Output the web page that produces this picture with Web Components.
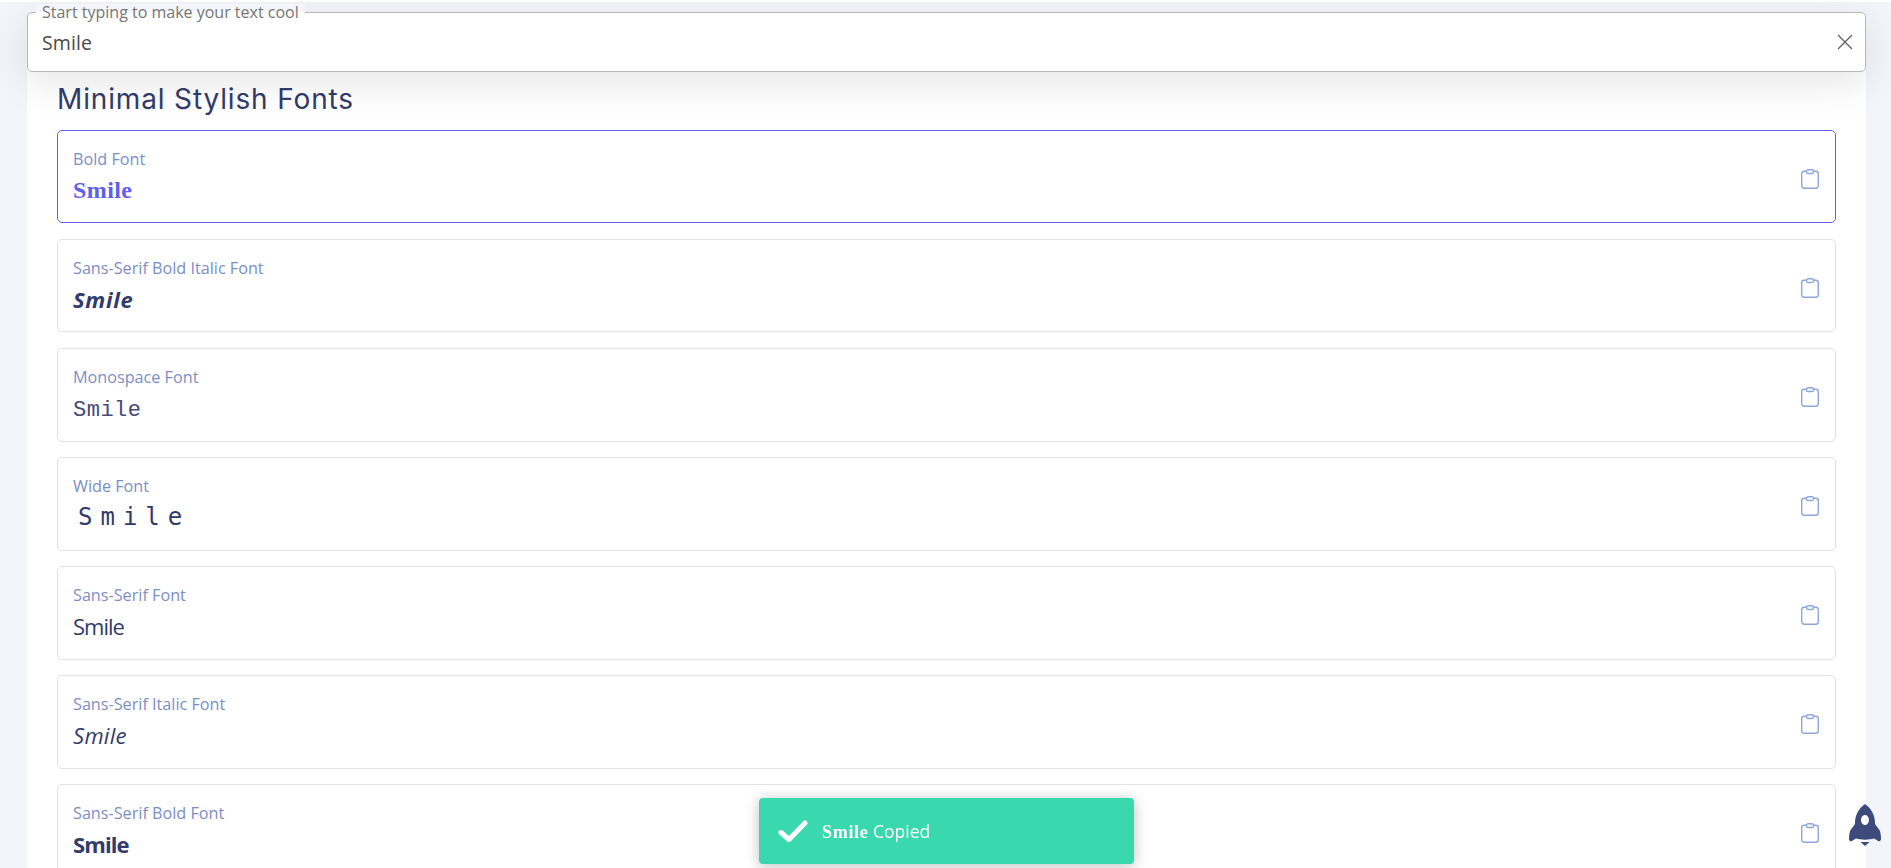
<!doctype html>
<html lang="en">
<head>
<meta charset="utf-8">
<title>Minimal Stylish Fonts</title>
<style>
  html { background: #fff; height: 100%; overflow: hidden; }
  body {
    margin: 2px 0 0;
    height: calc(100% - 2px);
    overflow: hidden;
    background: #f4f5fb;
    font-family: "Open Sans", "Noto Sans", sans-serif;
  }
</style>
</head>
<body>
<app-page>
  <search-field slot="search" legend="Start typing to make your text cool" value="Smile"></search-field>
  <font-section title="Minimal Stylish Fonts">
    <font-card label="Bold Font" kind="bold" active>Smile</font-card>
    <font-card label="Sans-Serif Bold Italic Font" kind="sans-bold-italic">Smile</font-card>
    <font-card label="Monospace Font" kind="mono">Smile</font-card>
    <font-card label="Wide Font" kind="wide">Smile</font-card>
    <font-card label="Sans-Serif Font" kind="sans">Smile</font-card>
    <font-card label="Sans-Serif Italic Font" kind="sans-italic">Smile</font-card>
    <font-card label="Sans-Serif Bold Font" kind="sans-bold">Smile</font-card>
  </font-section>
</app-page>
<copy-toast><b>Smile</b> Copied</copy-toast>
<scroll-rocket></scroll-rocket>

<script>
(() => {
  class AppPage extends HTMLElement {
    constructor() {
      super();
      this.attachShadow({ mode: "open" }).innerHTML = `
        <style>
          :host {
            display: block;
            width: 1839px;
            margin-left: 27px;
            min-height: 100vh;
            background: #fff;
            border-radius: 8px 8px 0 0;
          }
        </style>
        <slot name="search"></slot>
        <slot></slot>
      `;
    }
  }

  class SearchField extends HTMLElement {
    constructor() {
      super();
      const legend = this.getAttribute("legend") || "";
      const value = this.getAttribute("value") || "";
      this.attachShadow({ mode: "open" }).innerHTML = `
        <style>
          :host {
            display: block;
            position: relative;
            z-index: 2;
            padding-top: 10px;
            background: linear-gradient(#f4f5fb 40px, transparent 40px);
            border-radius: 8px 8px 0 0;
          }
          .box {
            box-sizing: border-box;
            height: 60px;
            background: #fff;
            border: 1px solid #b6b6b6;
            border-radius: 5px;
            box-shadow: 0 10px 40px rgba(0, 0, 0, 0.11);
            display: flex;
            align-items: center;
            justify-content: space-between;
            padding: 0 12px 0 14px;
            position: relative;
          }
          .legend {
            position: absolute;
            left: 8px;
            top: -9px;
            padding: 0 6px;
            font-size: 16px;
            line-height: 17px;
            color: #757575;
            background: linear-gradient(#f4f5fb 8px, #fff 8px);
          }
          .value {
            font-size: 19.5px;
            letter-spacing: .1px;
            color: #4a4a4a;
          }
          svg { display: block; }
        </style>
        <div class="box">
          <span class="legend">${legend}</span>
          <span class="value">${value}</span>
          <svg width="16" height="16" viewBox="0 0 16 16" fill="none" stroke="#5f5f5f" stroke-width="1.3" aria-hidden="true">
            <path d="M1 1 15 15M15 1 1 15"/>
          </svg>
        </div>
      `;
    }
  }

  class FontSection extends HTMLElement {
    constructor() {
      super();
      const title = this.getAttribute("title") || "";
      this.removeAttribute("title");
      this.attachShadow({ mode: "open" }).innerHTML = `
        <style>
          :host {
            display: block;
            padding: 0 30px;
          }
          h2 {
            margin: 0;
            height: 58px;
            font: 400 28px/54px Inter, "Noto Sans", sans-serif;
            letter-spacing: .85px;
            color: #323b6b;
          }
          .list {
            display: flex;
            flex-direction: column;
            gap: 15.7px;
          }
        </style>
        <h2>${title}</h2>
        <div class="list"><slot></slot></div>
      `;
    }
  }

  class FontCard extends HTMLElement {
    constructor() {
      super();
      const label = this.getAttribute("label") || "";
      this.attachShadow({ mode: "open" }).innerHTML = `
        <style>
          :host {
            display: block;
            box-sizing: border-box;
            height: 93.4px;
            background: #fff;
            border: 1px solid #e2e2e2;
            border-radius: 5px;
            padding: 16px 15px 0;
            position: relative;
            color: #323b6b;
          }
          :host([active]) {
            border-color: #5d5fef;
            color: #5d5fef;
          }
          .label {
            font-size: 16.2px;
            line-height: 24px;
            color: #7b8ec8;
          }
          .value {
            height: 38px;
            line-height: 38px;
            font-size: 22px;
            white-space: nowrap;
          }
          :host([kind="bold"]) .value {
            font-family: "Liberation Serif", serif;
            font-weight: 700;
            font-size: 24px;
            letter-spacing: .4px;
          }
          :host([kind="sans-bold-italic"]) .value {
            font-weight: 700;
            font-style: italic;
            letter-spacing: .7px;
          }
          :host([kind="mono"]) .value {
            font-family: "Liberation Mono", monospace;
            line-height: 44px;
            letter-spacing: .5px;
            color: #434b78;
          }
          :host([kind="wide"]) .value {
            font-family: "DejaVu Sans Mono", monospace;
            font-size: 24px;
            letter-spacing: 8px;
            padding-left: 5px;
          }
          :host([kind="sans"]) .value {
            letter-spacing: -1px;
          }
          :host([kind="sans-italic"]) .value {
            font-style: italic;
            letter-spacing: .3px;
          }
          :host([kind="sans-bold"]) .value {
            font-weight: 700;
            letter-spacing: -.9px;
          }
          .copy {
            position: absolute;
            right: 16px;
            top: 38px;
            display: block;
          }
        </style>
        <div class="label">${label}</div>
        <div class="value"><slot></slot></div>
        <svg class="copy" width="18" height="20" viewBox="0 0 18 20" fill="none" stroke="#8ea6d8" stroke-width="1.4" aria-hidden="true">
          <rect x="0.7" y="2.2" width="16.6" height="17" rx="2.4"/>
          <rect x="5.5" y="0.7" width="7" height="3.800" rx="1.6" fill="#fff"/>
        </svg>
      `;
    }
  }

  class CopyToast extends HTMLElement {
    constructor() {
      super();
      this.attachShadow({ mode: "open" }).innerHTML = `
        <style>
          :host {
            position: fixed;
            left: 759px;
            top: 798px;
            width: 375px;
            height: 66px;
            box-sizing: border-box;
            padding-left: 19px;
            display: flex;
            align-items: center;
            gap: 14px;
            background: #39d8ae;
            border-radius: 4px;
            box-shadow: 0 2px 14px rgba(0, 0, 0, 0.25);
            color: #fff;
            font-size: 17.5px;
            z-index: 5;
          }
          ::slotted(b) {
            font-family: "Liberation Serif", serif;
            font-size: 18px;
            letter-spacing: .7px;
          }
          svg { display: block; }
        </style>
        <svg width="30" height="24" viewBox="0 0 30 24" fill="none" stroke="#fff" stroke-width="5" stroke-linecap="round" stroke-linejoin="round" aria-hidden="true">
          <path d="M3 13.500 11 20.500 27 4"/>
        </svg>
        <span><slot></slot></span>
      `;
    }
  }

  class ScrollRocket extends HTMLElement {
    constructor() {
      super();
      this.attachShadow({ mode: "open" }).innerHTML = `
        <style>
          :host {
            position: fixed;
            left: 1849px;
            top: 804px;
            width: 32px;
            height: 42px;
            z-index: 5;
          }
          svg { display: block; }
        </style>
        <svg width="32" height="42" viewBox="0 0 32 42" fill="#3d4a7c" aria-hidden="true">
          <path fill-rule="evenodd" d="M16 0C22 4 26 11 26 19V20L30.500 26C31.500 28 32 31 32 36L30 37.500 25 34.500C21 36 11 36 7 34.500L2 37.500 0 36C0 31 .5 28 1.500 26L6 20V19C6 11 10 4 16 0ZM16 11C13.800 11 12 13.200 12 16S13.800 21 16 21 20 18.800 20 16 18.200 11 16 11Z"/>
          <path d="M11.500 38H20.500L16 42Z"/>
        </svg>
      `;
    }
  }

  customElements.define("app-page", AppPage);
  customElements.define("search-field", SearchField);
  customElements.define("font-section", FontSection);
  customElements.define("font-card", FontCard);
  customElements.define("copy-toast", CopyToast);
  customElements.define("scroll-rocket", ScrollRocket);
})();
</script>
</body>
</html>
